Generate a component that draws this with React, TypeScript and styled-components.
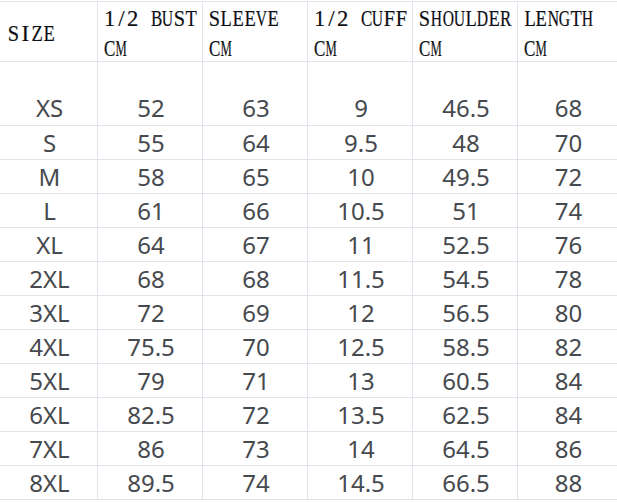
import styled, { createGlobalStyle } from "styled-components";

const GlobalStyle = createGlobalStyle`
  html, body {
    margin: 0;
    padding: 0;
    background: #ffffff;
  }
`;

const LINE = "#e2e3ec";
const HEAD_SIZE = 23;
const CELL_W = 11.6;

// advance widths of Liberation Serif (em units), used to squeeze wide glyphs into a fixed cell
const widths: Record<string, number> = {
  S: 0.556, I: 0.333, Z: 0.611, E: 0.611, "1": 0.5, "/": 0.278, "2": 0.5,
  B: 0.667, U: 0.722, T: 0.611, L: 0.611, V: 0.722, C: 0.667, F: 0.556,
  H: 0.722, O: 0.722, D: 0.722, R: 0.667, N: 0.722, G: 0.722, M: 0.889,
};

const headers = [
  ["SIZE"],
  ["1/2 BUST", "CM"],
  ["SLEEVE", "CM"],
  ["1/2 CUFF", "CM"],
  ["SHOULDER", "CM"],
  ["LENGTH", "CM"],
];

const rows = [
  ["XS", "52", "63", "9", "46.5", "68"],
  ["S", "55", "64", "9.5", "48", "70"],
  ["M", "58", "65", "10", "49.5", "72"],
  ["L", "61", "66", "10.5", "51", "74"],
  ["XL", "64", "67", "11", "52.5", "76"],
  ["2XL", "68", "68", "11.5", "54.5", "78"],
  ["3XL", "72", "69", "12", "56.5", "80"],
  ["4XL", "75.5", "70", "12.5", "58.5", "82"],
  ["5XL", "79", "71", "13", "60.5", "84"],
  ["6XL", "82.5", "72", "13.5", "62.5", "84"],
  ["7XL", "86", "73", "14", "64.5", "86"],
  ["8XL", "89.5", "74", "14.5", "66.5", "88"],
];

const Table = styled.div`
  display: grid;
  grid-template-columns: 98px 105px 105px 105px 105px 1fr;
  grid-template-rows: 60px 64px repeat(11, 34px);
  margin-top: 1px;
  border-top: 1px solid ${LINE};
  width: 100%;
`;

const Cell = styled.div<{ $last: boolean; $tall?: boolean }>`
  box-sizing: border-box;
  border-bottom: 1px solid ${LINE};
  border-right: ${(p) => (p.$last ? "none" : `1px solid ${LINE}`)};
  display: flex;
  align-items: ${(p) => (p.$tall ? "flex-end" : "center")};
`;

const HeadCell = styled(Cell)<{ $single: boolean }>`
  flex-direction: column;
  align-items: flex-start;
  justify-content: ${(p) => (p.$single ? "center" : "flex-start")};
  padding: ${(p) => (p.$single ? "4px 0 0 8px" : "2px 0 0 6px")};
  font-family: "Liberation Serif", "DejaVu Serif", serif;
  font-size: ${HEAD_SIZE}px;
  line-height: 30px;
  color: #0d0f14;
  -webkit-text-stroke: 0.2px #0d0f14;
`;

const HeadLine = styled.div`
  white-space: nowrap;
  display: flex;
`;

const Char = styled.span`
  display: inline-flex;
  justify-content: center;
  width: ${CELL_W}px;
`;

const Ink = styled.span`
  display: inline-block;
`;

const DataCell = styled(Cell)`
  justify-content: center;
  font-family: "Noto Sans", "Open Sans", sans-serif;
  font-size: 24px;
  color: #46494e;
  line-height: 34px;
  padding-left: 2px;
`;

function HeadText({ text }: { text: string }) {
  return (
    <HeadLine>
      {text.split("").map((c, i) => {
        const w = (widths[c] ?? 0.5) * HEAD_SIZE;
        const scale = Math.min(1, (CELL_W - 0.3) / w);
        return (
          <Char key={i}>
            <Ink style={{ transform: `scaleX(${scale.toFixed(3)})` }}>
              {c === " " ? "\u00a0" : c}
            </Ink>
          </Char>
        );
      })}
    </HeadLine>
  );
}

export default function App() {
  return (
    <>
      <GlobalStyle />
      <Table>
        {headers.map((h, i) => (
          <HeadCell key={i} $last={i === 5} $single={h.length === 1}>
            {h.map((line) => (
              <HeadText key={line} text={line} />
            ))}
          </HeadCell>
        ))}
        {rows.map((r, ri) =>
          r.map((v, ci) => (
            <DataCell key={`${ri}-${ci}`} $last={ci === 5} $tall={ri === 0}>
              {v}
            </DataCell>
          ))
        )}
      </Table>
    </>
  );
}
